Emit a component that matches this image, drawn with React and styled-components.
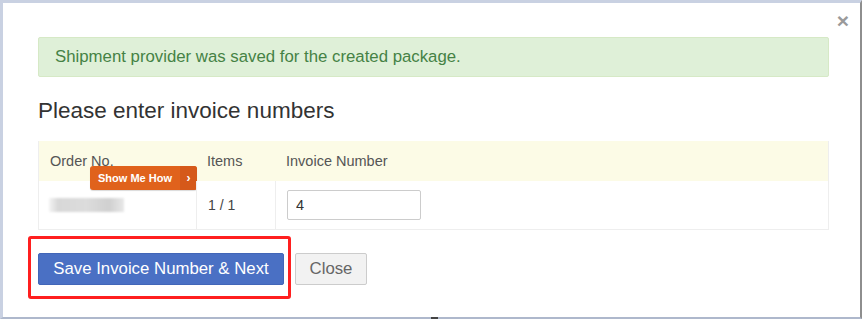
import React from 'react';
import styled, { createGlobalStyle } from 'styled-components';

const Global = createGlobalStyle`
  html, body {
    margin: 0;
    padding: 0;
    background: #fff;
  }
  body {
    font-family: "Liberation Sans", Arial, sans-serif;
    color: #333;
  }
`;

const Modal = styled.div`
  position: relative;
  box-sizing: border-box;
  width: 862px;
  height: 319px;
  border-top: 3px solid #c9d1e2;
  border-left: 3px solid #c9d1e2;
  border-right: 2px solid #8e8e8e;
  border-bottom: 2px solid #aeb8cc;
  background: #fff;
  padding: 34px 31px 0 35px;
`;

const CloseX = styled.span`
  position: absolute;
  top: 7px;
  right: 11px;
  font-size: 21px;
  font-weight: bold;
  color: #9a9a9a;
  line-height: 1;
`;

const Alert = styled.div`
  box-sizing: border-box;
  height: 40px;
  background: #dff0d8;
  border: 1px solid #d6e9c6;
  border-radius: 2px;
  color: #458245;
  font-size: 16.8px;
  padding: 0 16px;
  display: flex;
  align-items: center;
`;

const Title = styled.h3`
  margin: 21px 0 0;
  font-size: 22.5px;
  font-weight: normal;
  color: #333;
  line-height: 26px;
  height: 40px;
`;

const Table = styled.div`
  margin-top: 3px;
  display: grid;
  grid-template-columns: 157px 79px 1fr;
  border: 1px solid #eeeeee;
  border-top: none;
`;

const HeadCell = styled.div`
  background: #fcfbe6;
  height: 40px;
  display: flex;
  align-items: center;
  padding-left: 11px;
  font-size: 14.5px;
  color: #555;
`;

const Cell = styled.div`
  position: relative;
  height: 48px;
  display: flex;
  align-items: center;
  padding-left: 11px;
  border-left: ${p => (p.$first ? 'none' : '1px solid #eeeeee')};
  font-size: 14px;
  color: #444;
`;

const Blur = styled.div`
  width: 75px;
  height: 14px;
  margin-left: -1px;
  background: linear-gradient(90deg, #f4f4f4 0%, #d8d8d8 12%, #dcdcdc 50%, #d0d0d0 80%, #e8e8e8 100%);
  filter: blur(1px);
`;

const Badge = styled.div`
  position: absolute;
  top: -15px;
  left: 51px;
  height: 24px;
  display: flex;
  align-items: stretch;
  white-space: nowrap;
  border-radius: 3px;
  overflow: hidden;
  background: #e0621c;
  color: #fff;
  font-size: 11px;
  font-weight: bold;
  box-shadow: 0 1px 1px rgba(0, 0, 0, 0.15);
`;

const BadgeText = styled.span`
  display: flex;
  align-items: center;
  padding: 0 8px;
`;

const BadgeArrow = styled.span`
  display: flex;
  align-items: center;
  justify-content: center;
  width: 17px;
  background: #d5591a;
  font-size: 12px;
`;

const Input = styled.input`
  box-sizing: border-box;
  width: 134px;
  height: 30px;
  border: 1px solid #ccc;
  border-radius: 2px;
  padding: 0 8px;
  font-family: inherit;
  font-size: 14.5px;
  color: #333;
`;

const Actions = styled.div`
  position: relative;
  margin-top: 23px;
  display: flex;
  gap: 11px;
`;

const Highlight = styled.div`
  position: absolute;
  left: -10px;
  top: -17px;
  width: 263px;
  height: 63px;
  box-sizing: border-box;
  border: 3px solid #ff1f1f;
  border-radius: 3px;
  pointer-events: none;
`;

const Button = styled.button`
  height: 32px;
  box-sizing: border-box;
  font-family: inherit;
  font-size: 16.8px;
  border-radius: 2px;
  padding: 0;
  cursor: pointer;
  background: ${p => (p.$primary ? '#4a70c4' : '#f2f2f2')};
  color: ${p => (p.$primary ? '#fff' : '#666')};
  border: 1px solid ${p => (p.$primary ? '#4266b8' : '#cccccc')};
  width: ${p => p.$w}px;
`;

const Tick = styled.div`
  position: absolute;
  bottom: -2px;
  left: 428px;
  width: 7px;
  height: 2px;
  background: #444;
`;

export default function App() {
  return (
    <>
      <Global />
      <Modal>
        <CloseX>×</CloseX>
        <Alert>Shipment provider was saved for the created package.</Alert>
        <Title>Please enter invoice numbers</Title>
        <Table>
          <HeadCell>Order No.</HeadCell>
          <HeadCell>Items</HeadCell>
          <HeadCell>Invoice Number</HeadCell>
          <Cell $first>
            <Blur />
            <Badge>
              <BadgeText>Show Me How</BadgeText>
              <BadgeArrow>›</BadgeArrow>
            </Badge>
          </Cell>
          <Cell>1 / 1</Cell>
          <Cell>
            <Input defaultValue="4" />
          </Cell>
        </Table>
        <Actions>
          <Highlight />
          <Button $primary $w={246}>Save Invoice Number &amp; Next</Button>
          <Button $w={72}>Close</Button>
        </Actions>
        <Tick />
      </Modal>
    </>
  );
}
